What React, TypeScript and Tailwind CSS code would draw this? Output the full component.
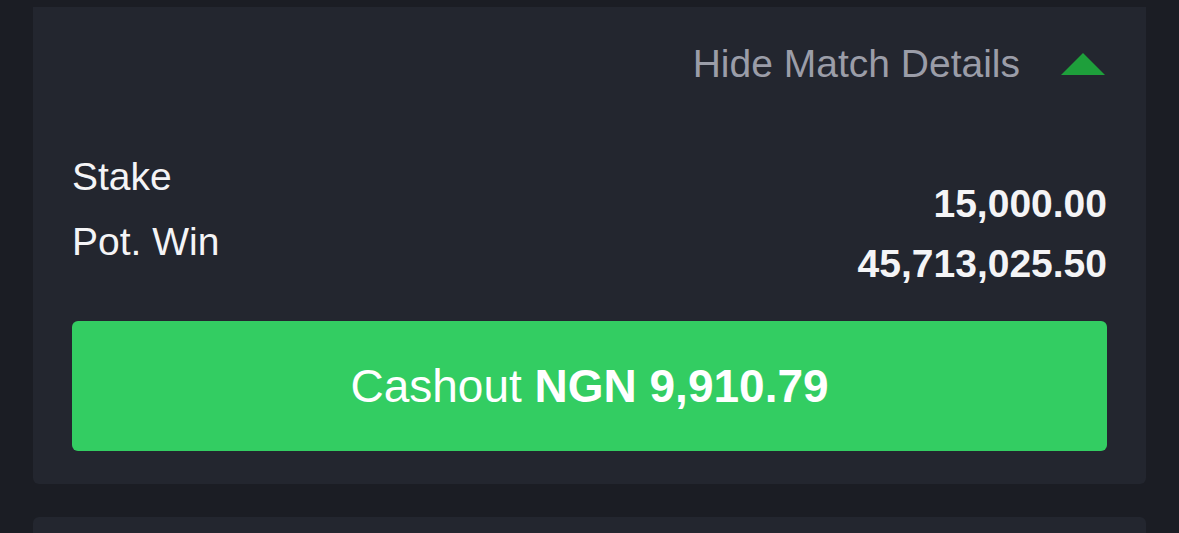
import React from "react";

const Row: React.FC<{ label: string }> = ({ label }) => (
  <span className="block h-[44px] leading-[44px]">{label}</span>
);

const App: React.FC = () => {
  return (
    <div className="w-[1179px] h-[533px] overflow-hidden bg-[#1b1d24] px-[33px] pt-[7px] font-['Liberation_Sans',Arial,sans-serif]">
      <div className="bg-[#23262f] rounded-b-[6px] px-[39px] pt-[35px] pb-[33px]">
        <div className="flex justify-end items-center gap-[41px] h-[44px] text-[39px] leading-[44px] text-[#9b9da8]">
          <span>Hide Match Details</span>
          <svg width="44" height="22" viewBox="0 0 44 22" className="mr-[2px]">
            <polygon points="22,0 44,22 0,22" fill="#1e9f3b" />
          </svg>
        </div>

        <div className="mt-[69px] flex justify-between text-[39px] text-[#f4f4f6]">
          <div className="flex flex-col gap-[21px]">
            <Row label="Stake" />
            <Row label="Pot. Win" />
          </div>
          <div className="mt-[27px] flex flex-col items-end gap-[16px] font-bold">
            <Row label="15,000.00" />
            <Row label="45,713,025.50" />
          </div>
        </div>

        <button className="mt-[35px] flex h-[130px] w-full items-center justify-center rounded-[6px] bg-[#33cd62] text-[46px] text-white">
          <span>
            Cashout <span className="font-bold">NGN 9,910.79</span>
          </span>
        </button>
      </div>

      <div className="mt-[33px] h-[40px] rounded-t-[6px] bg-[#23262f]" />
    </div>
  );
};

export default App;
